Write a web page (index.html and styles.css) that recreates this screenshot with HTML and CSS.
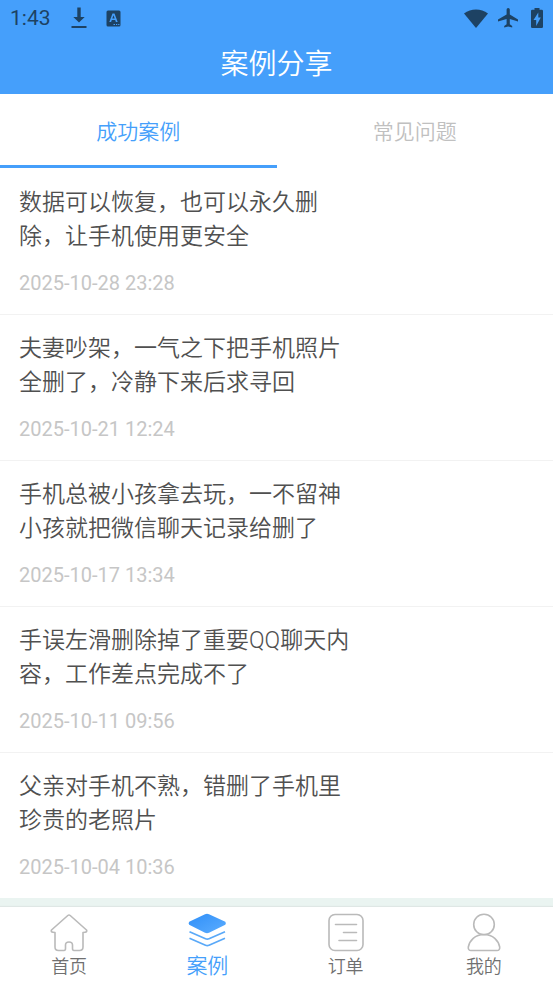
FILE: index.html
```html
<!DOCTYPE html>
<html lang="zh-CN">
<head>
<meta charset="utf-8">
<meta name="viewport" content="width=device-width, initial-scale=1">
<title>案例分享</title>
<link rel="stylesheet" href="styles.css">
</head>
<body>
<header class="header">
  <div class="status">
    <span class="clock">1:43</span>
    <svg class="download" width="16" height="22" viewBox="0 0 16 22" aria-hidden="true"><path d="M6.3 0.5h3.4v9.5h4L8 15.5 2.300 10h4zM0.500 19h15v2h-15z"/></svg>
    <svg class="lang" width="15" height="17" viewBox="0 0 15 17" aria-hidden="true"><path fill-rule="evenodd" d="M2 0.500h11a1.500 1.500 0 0 1 1.500 1.500v13a1.500 1.500 0 0 1-1.500 1.500H2A1.500 1.500 0 0 1 .5 15V2A1.500 1.500 0 0 1 2 .5zM6.500 3.500 3.300 12h1.800l.7-2h3.400l.7 2h1.800L8.500 3.500zM7.500 5.300 8.700 8.600H6.300zM7.500 14v1H9v-1zM10 14v1h1.200v-1zM12.200 14v1h1.200v-1z"/></svg>
    <span class="spacer"></span>
    <svg width="24" height="19" viewBox="0 0 24 19" aria-hidden="true"><path d="M0 4.500C7-1 17-1 24 4.500L12 19z"/></svg>
    <svg class="plane" width="20" height="20" viewBox="0 0 20 20" aria-hidden="true"><path d="M20 13.500v-2L11.800 6.500V1.600a1.600 1.600 0 0 0-3.200 0v4.900L0 11.500v2l8.600-2.500v5.200L6.200 18v1.600l4-1.100 4 1.100V18l-2.400-1.800V11z"/></svg>
    <svg class="battery" width="12" height="20" viewBox="0 0 12 20" aria-hidden="true"><path fill-rule="evenodd" d="M1.200 1.800H3.500V0h5v1.800h2.300A1.200 1.200 0 0 1 12 3v15.800a1.200 1.200 0 0 1-1.200 1.200H1.200A1.200 1.200 0 0 1 0 18.800V3a1.200 1.200 0 0 1 1.200-1.200zM7.300 4.500 2.500 12h2.700v6L9.800 9.500H7.300z"/></svg>
  </div>
  <h1 class="title">案例分享</h1>
</header>
<div class="tabs" role="tablist">
  <button class="tab tab-active" type="button" role="tab" aria-selected="true">成功案例</button>
  <button class="tab" type="button" role="tab" aria-selected="false">常见问题</button>
</div>
<main class="list">
  <article class="item"><h2 class="headline">数据可以恢复，也可以永久删除，让手机使用更安全</h2><time class="date">2025-10-28 23:28</time></article>
  <article class="item"><h2 class="headline">夫妻吵架，一气之下把手机照片全删了，冷静下来后求寻回</h2><time class="date">2025-10-21 12:24</time></article>
  <article class="item"><h2 class="headline">手机总被小孩拿去玩，一不留神小孩就把微信聊天记录给删了</h2><time class="date">2025-10-17 13:34</time></article>
  <article class="item"><h2 class="headline">手误左滑删除掉了重要QQ聊天内容，工作差点完成不了</h2><time class="date">2025-10-11 09:56</time></article>
  <article class="item"><h2 class="headline">父亲对手机不熟，错删了手机里珍贵的老照片</h2><time class="date">2025-10-04 10:36</time></article>
</main>
<nav class="nav">
  <a class="nav-item" href="#home">
    <svg class="icon" width="40" height="40" viewBox="0 0 40 40" aria-hidden="true"><path d="M18.800 3.500Q20 2.500 21.200 3.500L37.500 18Q38.500 19.800 36 20.200L34 20.500V35Q34 38.500 30.500 38.500H25Q23.500 38.500 23.500 36.500V33Q23.500 30 20 30T16.500 33V36.500Q16.500 38.500 15 38.500H9.500Q6 38.500 6 35V20.500L4 20.200Q1.500 19.800 2.500 18Z"/></svg>
    <span>首页</span>
  </a>
  <a class="nav-item nav-active" href="#cases" aria-current="page">
    <svg width="40" height="40" viewBox="0 0 40 40" aria-hidden="true">
      <defs><linearGradient id="layer" x1="0" y1="0" x2="1" y2="1"><stop offset="0" stop-color="#2f8ff8"/><stop offset="1" stop-color="#5cadff"/></linearGradient></defs>
      <path fill="url(#layer)" d="M18 2.200Q20 1.200 22 2.200L38.300 9.800Q39.500 11.300 38.300 12.800L22 20.700Q20 21.600 18 20.700L2.200 12.800Q1 11.300 2.200 9.800Z"/>
      <path fill="none" stroke="#5aa9f8" stroke-width="1.700" d="M2.500 19.800 18.500 26.800Q20.200 27.600 22 26.800L38 19.800M2.500 26.300 18.500 33.300Q20.200 34.100 22 33.300L38 26.300"/>
    </svg>
    <span>案例</span>
  </a>
  <a class="nav-item" href="#orders">
    <svg class="icon" width="40" height="40" viewBox="0 0 40 40" aria-hidden="true"><rect x="3" y="2.500" width="34" height="36" rx="6"/><path d="M9.500 12.500h21M17.500 20.500h13M13 28.500h17.500"/></svg>
    <span>订单</span>
  </a>
  <a class="nav-item" href="#me">
    <svg class="icon" width="40" height="40" viewBox="0 0 40 40" aria-hidden="true"><circle cx="20" cy="12.500" r="10.300"/><path d="M20 22.500C11 22.500 5.500 28.500 4.300 35Q4 38.500 7 38.500H33Q36 38.500 35.700 35C34.500 28.500 29 22.500 20 22.500Z"/></svg>
    <span>我的</span>
  </a>
</nav>
</body>
</html>
```
FILE: styles.css
```css
* {
  box-sizing: border-box;
}

body {
  display: flex;
  flex-direction: column;
  min-height: 100vh;
  margin: 0;
  background: #eaf4f1;
  color: #505050;
  font-family: Roboto, "Noto Sans CJK SC", sans-serif;
  font-weight: 350;
}

.header {
  height: 94px;
  background: #459ffb;
}

.status {
  display: flex;
  align-items: center;
  height: 36px;
  padding: 0 10px;
  color: #1d4263;
  fill: currentColor;
}

.clock {
  width: 61px;
  font-size: 21px;
  font-weight: 400;
  line-height: 38px;
}

.lang {
  margin-left: 19px;
}

.spacer {
  flex: 1;
}

.plane {
  margin: 0 13px 0 10px;
}

.title {
  margin: 0;
  color: #fff;
  font-size: 28px;
  font-weight: 350;
  line-height: 58px;
  text-align: center;
}

.tabs {
  display: flex;
  height: 75px;
  background: #fff;
}

.tab {
  flex: 1;
  height: 74px;
  padding: 0;
  border: 0;
  border-bottom: 3px solid transparent;
  background: none;
  color: #c0c0c0;
  font: inherit;
  font-size: 21px;
}

.tab-active {
  border-color: #459ffb;
  color: #459ffb;
}

.list {
  background: #fff;
}

.item {
  padding: 17px 19px 19px;
  border-bottom: 1px solid #f2f2f2;
}

.item:last-child {
  border-bottom: 0;
}

.headline {
  width: 65%;
  margin: 0 0 17px;
  font-size: 23px;
  font-weight: 350;
  line-height: 34px;
}

.date {
  display: block;
  color: #c6c6c6;
  font-size: 20px;
  font-weight: 400;
  line-height: 24px;
}

.nav {
  display: flex;
  height: 77px;
  margin-top: auto;
  background: #fff;
  box-shadow: 0 -1px 1px #dfe7e5;
}

.nav-item {
  display: flex;
  flex: 1;
  flex-direction: column;
  align-items: center;
  padding-top: 5px;
  color: #707070;
  font-size: 18px;
  line-height: 30px;
  text-decoration: none;
}

.nav-active {
  color: #459ffb;
  font-size: 21px;
  line-height: 28px;
}

.icon {
  fill: none;
  stroke: #bababa;
  stroke-width: 1.6;
  stroke-linecap: round;
  stroke-linejoin: round;
}
```
